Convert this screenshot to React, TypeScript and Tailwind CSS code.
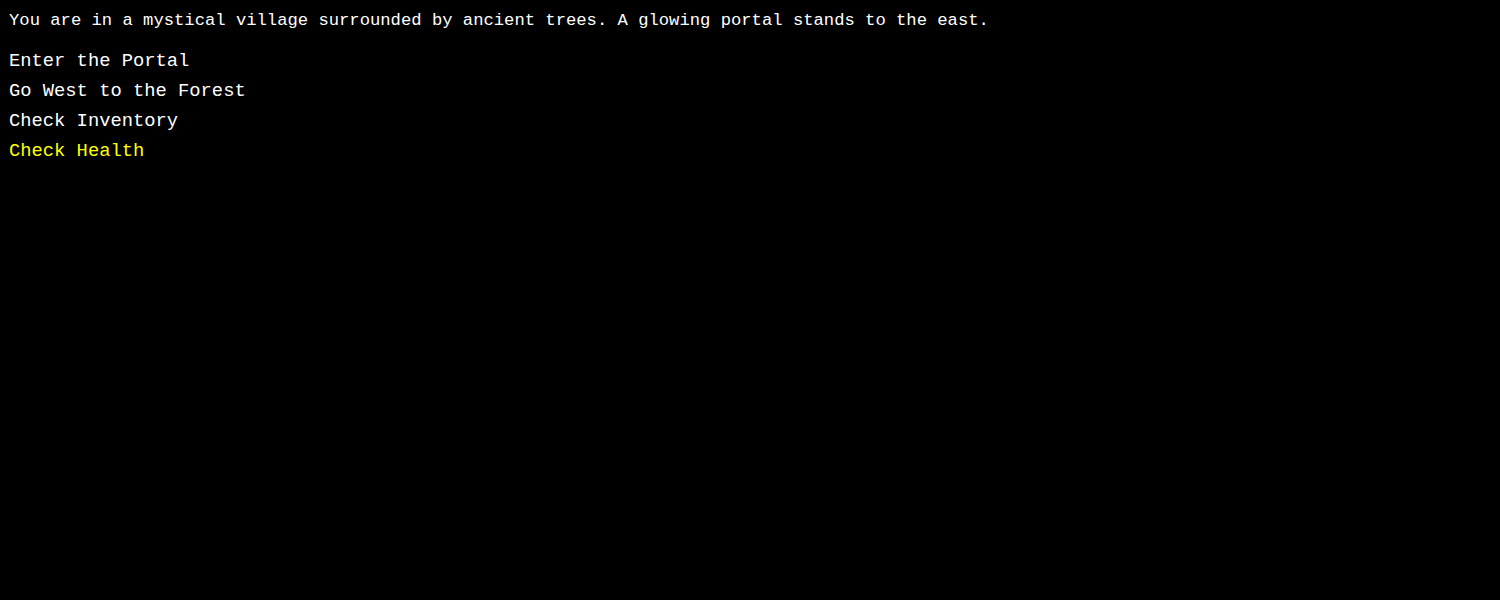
const options = [
  "Enter the Portal",
  "Go West to the Forest",
  "Check Inventory",
  "Check Health",
];

export default function App() {
  const selected = 3;

  return (
    <div className="min-h-[600px] w-full bg-black px-[9px] pt-[10px] font-['Liberation_Mono',monospace] text-white">
      <p className="text-[17.2px] leading-[22px]">
        You are in a mystical village surrounded by ancient trees. A glowing portal stands to the east.
      </p>
      <ul className="mt-[14px] flex flex-col">
        {options.map((opt, i) => (
          <li
            key={opt}
            className={`text-[18.8px] leading-[30px] ${i === selected ? "text-[#ffff00]" : "text-white"}`}
          >
            {opt}
          </li>
        ))}
      </ul>
    </div>
  );
}
